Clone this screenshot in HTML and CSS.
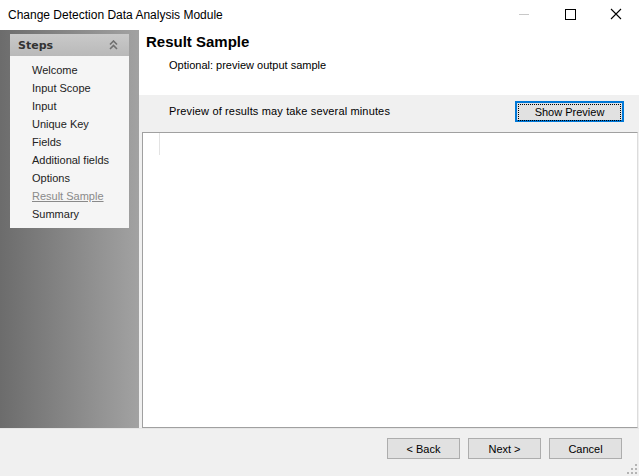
FILE: index.html
```html
<!DOCTYPE html>
<html lang="en">
<head>
  <meta charset="UTF-8">
  <title>Change Detection Data Analysis Module</title>
  <link rel="stylesheet" href="styles.css">
</head>
<body>

  <div class="titlebar">
    <div class="title">Change Detection Data Analysis Module</div>
    <div class="controls">
      <svg class="ctl" width="46" height="30" viewBox="0 0 46 30"><line x1="18" y1="14.5" x2="28" y2="14.5" stroke="#c8c8c8" stroke-width="1"/></svg>
      <svg class="ctl" width="46" height="30" viewBox="0 0 46 30"><rect x="18.5" y="9.5" width="10" height="10" fill="none" stroke="#000" stroke-width="1"/></svg>
      <svg class="ctl" width="46" height="30" viewBox="0 0 46 30"><path d="M18 9 L28 19 M28 9 L18 19" stroke="#000" stroke-width="1.1"/></svg>
    </div>
  </div>

  <div class="main">
    <!-- Wizard steps -->
    <div class="sidebar">
      <div class="steps">
        <div class="steps-head">
          <span>Steps</span>
          <svg width="9" height="10" viewBox="0 0 9 10"><path d="M1 4.5 L4.5 1 L8 4.5 M1 9 L4.5 5.5 L8 9" fill="none" stroke="#707070" stroke-width="1.6"/></svg>
        </div>
        <ul class="step-list">
          <li>Welcome</li>
          <li>Input Scope</li>
          <li>Input</li>
          <li>Unique Key</li>
          <li>Fields</li>
          <li>Additional fields</li>
          <li>Options</li>
          <li class="current">Result Sample</li>
          <li>Summary</li>
        </ul>
      </div>
    </div>

    <div class="panel">
      <div class="header">
        <div class="heading">Result Sample</div>
        <div class="sub">Optional: preview output sample</div>
      </div>
      <div class="band">
        <span class="note">Preview of results may take several minutes</span>
        <button class="btn focused"><span>Show Preview</span></button>
      </div>
      <div class="results">
        <div class="col-line"></div>
      </div>
    </div>
  </div>

  <div class="footer">
    <button class="btn">&lt; Back</button>
    <button class="btn">Next &gt;</button>
    <button class="btn">Cancel</button>
    <svg class="grip" width="10" height="10" viewBox="0 0 10 10" fill="#b4b4b4">
      <rect x="8" y="0" width="2" height="2"/>
      <rect x="4" y="4" width="2" height="2"/><rect x="8" y="4" width="2" height="2"/>
      <rect x="0" y="8" width="2" height="2"/><rect x="4" y="8" width="2" height="2"/><rect x="8" y="8" width="2" height="2"/>
    </svg>
  </div>

</body>
</html>
```

FILE: styles.css
```css
body {
  margin: 0;
  width: 639px;
  height: 476px;
  overflow: hidden;
  background-color: #f0f0f0;
  font-family: "Liberation Sans", Arial, sans-serif;
  font-size: 11px;
  color: #000;
  display: flex;
  flex-direction: column;
}

.titlebar {
  height: 30px;
  background-color: #fff;
  display: flex;
  align-items: center;
  justify-content: space-between;
}

.title {
  padding-left: 8px;
  font-size: 12px;
}

.controls {
  display: flex;
  align-self: flex-start;
}

.ctl {
  display: block;
}

.main {
  height: 398px;
  display: flex;
}

.sidebar {
  width: 139px;
  background: linear-gradient(to right, #6c6c6c, #a2a2a2);
  padding: 4px 0 0 10px;
  box-sizing: border-box;
}

.steps {
  width: 119px;
  background-color: #f5f5f5;
}

.steps-head {
  height: 22px;
  background: linear-gradient(to bottom, #c9c9c9, #b9b9b9);
  display: flex;
  align-items: center;
  justify-content: space-between;
  padding: 0 11px 0 8px;
  font-family: "DejaVu Sans", sans-serif;
  font-weight: bold;
  font-size: 11px;
  color: #333;
}

.step-list {
  list-style: none;
  margin: 0;
  padding: 5px 0 5px 22px;
}

.step-list li {
  height: 18px;
  line-height: 18px;
  color: #222;
}

.step-list li.current {
  color: #8a8a8a;
  text-decoration: underline;
}

.panel {
  flex: 1;
  display: flex;
  flex-direction: column;
}

.header {
  height: 65px;
  background-color: #fff;
  box-sizing: border-box;
  padding: 3px 0 0 7px;
}

.heading {
  font-size: 15px;
  font-weight: bold;
  line-height: 18px;
}

.sub {
  margin-top: 7px;
  padding-left: 23px;
  line-height: 14px;
}

.band {
  height: 37px;
  display: flex;
  align-items: center;
  justify-content: space-between;
  padding: 0 15px 5px 30px;
  box-sizing: border-box;
}

.note {
  letter-spacing: 0.15px;
}

.btn {
  width: 73px;
  height: 21px;
  padding: 0;
  background-color: #e1e1e1;
  border: 1px solid #adadad;
  font-family: "Liberation Sans", Arial, sans-serif;
  font-size: 11px;
  color: #000;
}

.btn.focused {
  width: 109px;
  border: 2px solid #0078d7;
  padding: 1px;
}

.btn.focused span {
  display: block;
  height: 15px;
  line-height: 15px;
  border: 1px dotted #000;
}

.results {
  flex: 1;
  margin: 0 1px 0 3px;
  background-color: #fff;
  border: 1px solid #a0a0a0;
  border-right-color: #dcdcdc;
}

.col-line {
  width: 1px;
  height: 22px;
  margin-left: 16px;
  background-color: #e3e3e3;
}

.footer {
  flex: 1;
  display: flex;
  justify-content: flex-end;
  align-items: flex-start;
  gap: 8px;
  padding: 9px 17px 0 0;
  border-top: 1px solid #e6e6e6;
  position: relative;
}

.grip {
  position: absolute;
  right: 2px;
  bottom: 2px;
}
```
